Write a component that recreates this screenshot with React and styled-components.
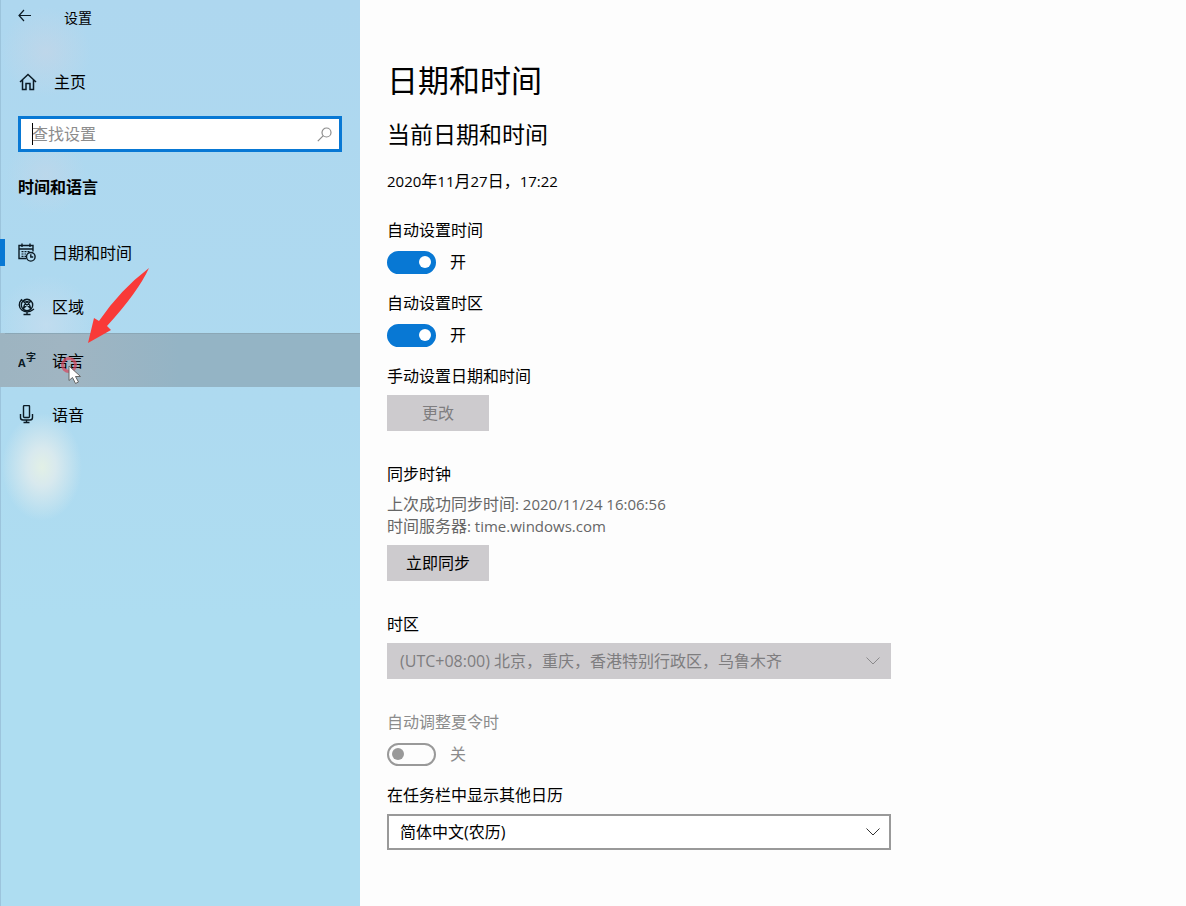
import React, { useState } from 'react';
import styled, { createGlobalStyle, css } from 'styled-components';

const GlobalStyle = createGlobalStyle`
  * {
    box-sizing: border-box;
  }
  body {
    margin: 0;
    background: #fdfdfd;
    color: #000;
    font-family: 'Open Sans', 'Noto Sans CJK SC', sans-serif;
    font-size: 16px;
    line-height: 22px;
  }
  button, input, select {
    margin: 0;
    font: inherit;
    color: inherit;
  }
  h1, h2, p {
    margin: 0;
    font-weight: 400;
  }
`;

const Page = styled.div`
  position: relative;
  display: flex;
  min-height: 100vh;
`;

const Sidebar = styled.aside`
  flex: 0 0 360px;
  border-left: 1px solid #9cc4dc;
  background:
    radial-gradient(ellipse 40px 54px at 41px 467px, #e2f0e6 0%, #d8e9ee 35%, rgba(174, 219, 240, 0) 100%),
    radial-gradient(circle 45px at 45px 52px, rgba(200, 214, 230, 0.6), rgba(200, 214, 230, 0)),
    radial-gradient(circle 40px at 45px 175px, rgba(200, 214, 230, 0.5), rgba(200, 214, 230, 0)),
    radial-gradient(circle 50px at 45px 325px, rgba(205, 222, 238, 0.6), rgba(205, 222, 238, 0)),
    linear-gradient(#aed7ef 0, #aedaf0 400px, #aeddf1 620px);
`;

const TitleBar = styled.header`
  display: flex;
  gap: 32px;
  padding: 7px 0 0 17px;
  font-size: 14px;
`;

const IconButton = styled.button`
  display: flex;
  padding: 0;
  border: 0;
  background: none;
  cursor: pointer;
`;

const HomeLink = styled.a`
  display: flex;
  align-items: center;
  gap: 17px;
  margin-top: 42px;
  padding-left: 18px;
  color: inherit;
  text-decoration: none;
`;

const SearchBox = styled.label`
  position: relative;
  display: flex;
  align-items: center;
  height: 36px;
  margin: 23px 18px 0 17px;
  padding: 0 7px 0 11px;
  border: 3px solid #0878d4;
  background: #fff;
`;

const SearchInput = styled.input`
  flex: 1;
  min-width: 0;
  padding: 0;
  border: 0;
  outline: 0;
  background: none;

  &::placeholder {
    color: #8c8c8c;
    opacity: 1;
  }
`;

const Caret = styled.span`
  position: absolute;
  left: 11px;
  top: 4px;
  width: 1px;
  height: 22px;
  background: #000;
`;

const GroupTitle = styled.h2`
  margin: 24px 0 27px 17px;
  font-size: 16px;
  font-weight: 700;
`;

const NavItem = styled.a`
  display: flex;
  align-items: center;
  gap: 16px;
  height: 54px;
  margin-left: -1px;
  padding: 1px 0 0 13px;
  border-left: 5px solid transparent;
  color: inherit;
  text-decoration: none;

  ${props => props.$current && css`
    border-left-color: #0878d4;
    border-image: linear-gradient(transparent 14px, #0878d4 14px, #0878d4 41px, transparent 41px) 0 0 0 5;
  `}

  ${props => props.$hovered && css`
    background: linear-gradient(90deg, #9db4c1 0, #a0b5c2 18%, #94b4c5 50%);
    background-origin: border-box;
    box-shadow: inset 0 1px #8ba7b6;
  `}
`;

const NavIcon = styled.svg`
  width: 18px;
  height: 20px;
  flex: none;
  fill: none;
  stroke: #0b1a24;
  stroke-width: 1.4;
`;

const Content = styled.main`
  flex: 1;
  min-width: 0;
  padding: 60px 26px 56px 27px;
`;

const Title = styled.h1`
  font-size: 31px;
  line-height: 40px;
`;

const Subtitle = styled.h2`
  margin-top: 18px;
  font-size: 23px;
  line-height: 32px;
`;

const CurrentDate = styled.p`
  margin: 20px 0 27px;
`;

const Latin = styled.span`
  font-size: 15px;
`;

const Section = styled.section`
  display: flex;
  flex-direction: column;
  gap: 17px;
  margin-bottom: 32px;
`;

const Field = styled.div`
  display: flex;
  flex-direction: column;
  align-items: flex-start;
  gap: 8px;
  color: ${props => (props.$disabled ? '#8c8c8c' : '#000')};
`;

const SwitchRow = styled.div`
  display: flex;
  align-items: center;
  gap: 14px;
  height: 26px;
`;

const Switch = styled.input`
  appearance: none;
  display: flex;
  align-items: center;
  width: 49px;
  height: 23px;
  padding: 0 3px;
  border: 2px solid #999;
  border-radius: 12px;

  &::before {
    content: '';
    width: 12px;
    height: 12px;
    border-radius: 50%;
    background: #999;
  }

  &:checked {
    justify-content: flex-end;
    border-color: #0878d4;
    background: #0878d4;
  }

  &:checked::before {
    background: #fff;
  }
`;

const Note = styled.p`
  color: #666;
`;

const Button = styled.button`
  width: 102px;
  height: 36px;
  padding: 0;
  border: 0;
  background: #cdcbce;

  &:disabled {
    color: #7e7d7f;
  }
`;

const SelectWrapper = styled.div`
  display: grid;
  align-items: center;
  width: 100%;
  max-width: 504px;

  > * {
    grid-area: 1 / 1;
  }
`;

const Select = styled.select`
  appearance: none;
  width: 100%;
  height: 36px;
  padding: 0 40px 0 11px;
  border: 2px solid #999;
  border-radius: 0;
  background: #fff;

  &:disabled {
    border-color: #cdcbce;
    background: #cdcbce;
    color: #7e7d7f;
    opacity: 1;
  }
`;

const Chevron = styled.svg`
  justify-self: end;
  width: 14px;
  height: 8px;
  margin-right: 11px;
  fill: none;
  stroke: ${props => (props.$disabled ? '#8a898b' : '#333')};
  pointer-events: none;
`;

const Pointer = styled.svg`
  position: absolute;
  left: 56px;
  top: 264px;
  pointer-events: none;
`;

const CalendarIcon = () => (
  <NavIcon viewBox="0 0 18 20">
    <path d="M8 15.500H1V2.500h14v6M1 6h14M4 .5v3.500M12 .5v3.500" />
    <path d="M3.500 8.700h2M6.500 8.700h2M9.500 8.700h2M3.500 11h2M6.500 11H8M3.500 13.300h2M6.500 13.300H8" strokeWidth="1.200" />
    <circle cx="12.800" cy="13.800" r="4.300" />
    <path d="M12.800 11.300v2.700h2.400" />
  </NavIcon>
);

const GlobeIcon = () => (
  <NavIcon viewBox="0 0 18 20">
    <circle cx="9" cy="8" r="5.700" />
    <path d="M5 4l8 8M13 4l-8 8M5.200 4.200c3-1 6.500 1.500 7.600 7.600M12.800 4.200c-3-1-6.500 1.500-7.600 7.600" strokeWidth="1.200" />
    <path d="M3 2.300L4.500 3.800M3.300 3C.3 6 .8 10.500 3.800 13c3 2.400 7.500 2.600 10.700 0l1.500-1M9 15v2.500M5.500 17.500h7" />
  </NavIcon>
);

const LanguageIcon = () => (
  <NavIcon viewBox="0 0 18 20">
    <text x="0" y="16" fontSize="11" fontWeight="700" fill="#0b1a24" stroke="none">A</text>
    <text x="8" y="10" fontSize="10" fontWeight="700" fill="#0b1a24" stroke="none">字</text>
  </NavIcon>
);

const MicIcon = () => (
  <NavIcon viewBox="0 0 18 20">
    <rect x="5.500" y=".5" width="6" height="12" rx="1" />
    <path d="M2.500 9v3.500q0 2.500 2.500 2.500h7q2.500 0 2.500-2.500V9M8.500 15v2.500M5.500 17.500h6" />
  </NavIcon>
);

const navItems = [
  { id: 'datetime', name: '日期和时间', icon: CalendarIcon },
  { id: 'region', name: '区域', icon: GlobeIcon },
  { id: 'language', name: '语言', icon: LanguageIcon },
  { id: 'speech', name: '语音', icon: MicIcon },
];

const ToggleField = ({ id, label, checked, onChange, disabled }) => (
  <Field $disabled={disabled}>
    <label htmlFor={id}>{label}</label>
    <SwitchRow>
      <Switch
        id={id}
        type="checkbox"
        role="switch"
        checked={checked}
        onChange={onChange}
        readOnly={!onChange}
        disabled={disabled}
      />
      <span>{checked ? '开' : '关'}</span>
    </SwitchRow>
  </Field>
);

const SelectField = ({ id, label, options, disabled }) => (
  <Field>
    <label htmlFor={id}>{label}</label>
    <SelectWrapper>
      <Select id={id} disabled={disabled}>
        {options.map(option => (
          <option key={option}>{option}</option>
        ))}
      </Select>
      <Chevron viewBox="0 0 14 8" $disabled={disabled}>
        <path d="M.5.5L7 7L13.500.5" />
      </Chevron>
    </SelectWrapper>
  </Field>
);

const App = () => {
  const [autoTime, setAutoTime] = useState(true);
  const [autoZone, setAutoZone] = useState(true);
  const [keyword, setKeyword] = useState('');

  return (
    <Page>
      <GlobalStyle />
      <Sidebar>
        <TitleBar>
          <IconButton aria-label="返回">
            <svg width="14" height="18" viewBox="0 0 14 18" fill="none" stroke="#0b1a24" strokeWidth="1.200">
              <path d="M13 8.500H1M6 3L1 8.500l5 5.500" />
            </svg>
          </IconButton>
          <span>设置</span>
        </TitleBar>
        <HomeLink href="#home">
          <NavIcon viewBox="0 0 18 20">
            <path d="M1 10L9 2.500L17 10M3.500 8v9.500H7V11.500h4v6h3.500V8" strokeWidth="1.500" />
          </NavIcon>
          主页
        </HomeLink>
        <SearchBox>
          <SearchInput
            type="text"
            aria-label="查找设置"
            placeholder="查找设置"
            value={keyword}
            onChange={e => setKeyword(e.target.value)}
          />
          {!keyword && <Caret />}
          <svg width="15" height="15" viewBox="0 0 15 15" fill="none" stroke="#8c8c8c" strokeWidth="1.200">
            <circle cx="9.500" cy="5.500" r="4.500" />
            <path d="M6.300 8.700L.8 14.200" />
          </svg>
        </SearchBox>
        <GroupTitle>时间和语言</GroupTitle>
        <nav>
          {navItems.map(({ id, name, icon: Icon }) => (
            <NavItem key={id} href={`#${id}`} $current={id === 'datetime'} $hovered={id === 'language'}>
              <Icon />
              {name}
            </NavItem>
          ))}
        </nav>
      </Sidebar>
      <Content>
        <Title>日期和时间</Title>
        <Subtitle>当前日期和时间</Subtitle>
        <CurrentDate>
          <Latin>2020</Latin>年<Latin>11</Latin>月<Latin>27</Latin>日，<Latin>17:22</Latin>
        </CurrentDate>
        <Section>
          <ToggleField id="auto-time" label="自动设置时间" checked={autoTime} onChange={() => setAutoTime(!autoTime)} />
          <ToggleField id="auto-zone" label="自动设置时区" checked={autoZone} onChange={() => setAutoZone(!autoZone)} />
          <Field>
            <span id="manual">手动设置日期和时间</span>
            <Button aria-describedby="manual" disabled>更改</Button>
          </Field>
        </Section>
        <Section>
          <Field>
            <span>同步时钟</span>
            <Note>
              上次成功同步时间<Latin>: 2020/11/24 16:06:56</Latin>
              <br />
              时间服务器<Latin>: time.windows.com</Latin>
            </Note>
            <Button>立即同步</Button>
          </Field>
        </Section>
        <Section>
          <SelectField id="zone" label="时区" options={['(UTC+08:00) 北京，重庆，香港特别行政区，乌鲁木齐']} disabled />
        </Section>
        <Section>
          <ToggleField id="dst" label="自动调整夏令时" checked={false} disabled />
          <SelectField id="calendar" label="在任务栏中显示其他日历" options={['简体中文(农历)', '繁体中文(农历)', '不显示其他日历']} />
        </Section>
      </Content>
      <Pointer width="100" height="124" viewBox="0 0 100 124">
        <path d="M93 4Q82 28 51 62L55 66L32 79L38 54L43 57Q64 26 93 4Z" fill="#f93a38" />
        <circle cx="13" cy="101" r="6.500" fill="none" stroke="#d9435a" strokeWidth="3" opacity="0.7" />
        <path d="M13 102v14.500l3.500-3 3 6 3-1.500-3-5.500h5z" fill="#fff" stroke="#666" />
      </Pointer>
    </Page>
  );
};

export default App;
